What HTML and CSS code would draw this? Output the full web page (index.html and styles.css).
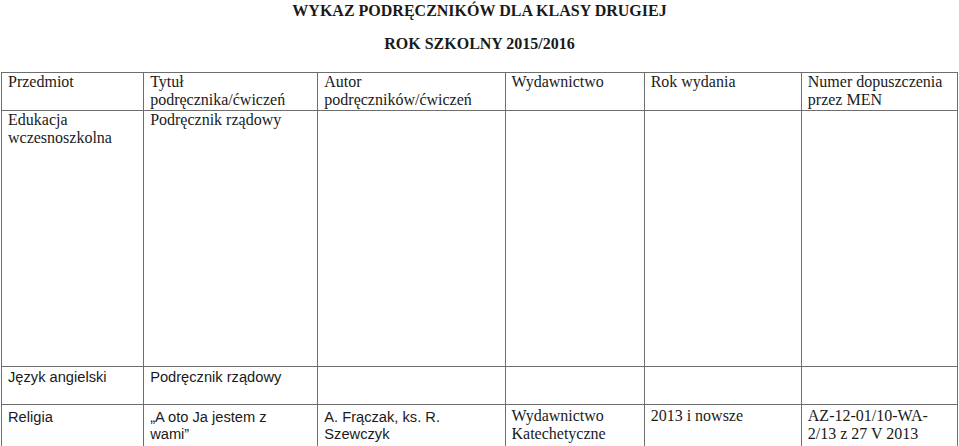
FILE: index.html
```html
<!DOCTYPE html>
<html lang="pl">
<head>
<meta charset="utf-8">
<title>Wykaz podręczników</title>
<link rel="stylesheet" href="styles.css">
</head>
<body>
<div class="page">
  <h1 class="title">WYKAZ PODRĘCZNIKÓW DLA KLASY DRUGIEJ</h1>
  <h2 class="subtitle">ROK SZKOLNY 2015/2016</h2>
  <table class="list">
    <colgroup>
      <col class="c1"><col class="c2"><col class="c3"><col class="c4"><col class="c5"><col class="c6">
    </colgroup>
    <tr class="head">
      <td>Przedmiot</td>
      <td>Tytuł <span class="nb">podręcznika/ćwiczeń</span></td>
      <td>Autor <span class="nb">podręczników/ćwiczeń</span></td>
      <td>Wydawnictwo</td>
      <td>Rok wydania</td>
      <td>Numer dopuszczenia przez MEN</td>
    </tr>
    <tr class="tall">
      <td>Edukacja wczesnoszkolna</td>
      <td>Podręcznik rządowy</td>
      <td></td>
      <td></td>
      <td></td>
      <td></td>
    </tr>
    <tr class="single">
      <td class="sans">Język angielski</td>
      <td class="sans">Podręcznik rządowy</td>
      <td></td>
      <td></td>
      <td></td>
      <td></td>
    </tr>
    <tr class="last">
      <td class="sans">Religia</td>
      <td class="sans">„A oto Ja jestem z<br>wami”</td>
      <td class="sans">A. Frączak, ks. R. Szewczyk</td>
      <td>Wydawnictwo Katechetyczne</td>
      <td>2013 i nowsze</td>
      <td>AZ-12-01/10-WA-2/13 z 27 V 2013</td>
    </tr>
  </table>
</div>
</body>
</html>
```
FILE: styles.css
```css
html, body {
  margin: 0;
  padding: 0;
  background: #ffffff;
}
body {
  font-family: "Liberation Serif", "Times New Roman", serif;
  font-size: 16px;
  color: #1a1a1a;
  overflow: hidden;
}
.page {
  width: 959px;
  padding-top: 2px;
}
.title, .subtitle {
  margin: 0;
  text-align: center;
  font-size: 16px;
  font-weight: bold;
  line-height: 18.4px;
  width: 957px;
  padding-left: 1px;
}
.subtitle {
  margin-top: 15px;
}
.list {
  margin-top: 18px;
  margin-left: 1px;
  width: 957px;
  table-layout: fixed;
  border-collapse: collapse;
}
.c1 { width: 142px; }
.c2 { width: 174px; }
.c3 { width: 187px; }
.c4 { width: 139px; }
.c5 { width: 157px; }
.c6 { width: 156px; }
.list td {
  border: 1px solid #6e6e6e;
  padding: 0 6px;
  vertical-align: top;
  line-height: 18.4px;
  overflow: hidden;
}
.nb { white-space: nowrap; }
.list tr.tall td { height: 255px; }
.list tr.single td { height: 35px; padding-top: 2px; }
.list tr.last td { height: 38px; padding-top: 2px; }
.list td.sans {
  font-family: "Liberation Sans", Arial, sans-serif;
  font-size: 14.67px;
  line-height: 17px;
}
.list tr.last td.sans { padding-top: 4px; }
```
